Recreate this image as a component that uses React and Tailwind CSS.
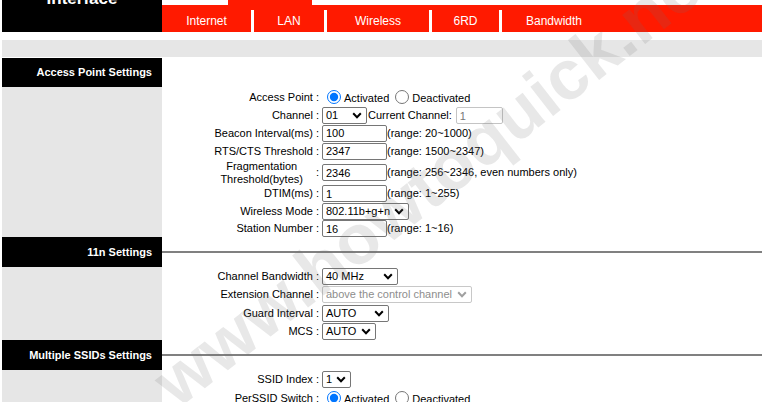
const Chevron = ({ grey }) => (
  <svg width="10" height="7" viewBox="0 0 10 7" className={grey ? "text-[#a0a0a0]" : "text-black"}>
    <path d="M1.2 1.3 L5 5.2 L8.8 1.3" stroke="currentColor" strokeWidth="2" fill="none" />
  </svg>
);

const Select = ({ value, w, disabled }) => (
  <div
    className={`${w} h-[17px] rounded-[2px] border flex items-center justify-between pl-[3px] pr-[4px] ${
      disabled ? "border-[#c8c8c8] text-[#8d8d8d]" : "border-[#767676] text-black"
    }`}
  >
    <span>{value}</span>
    <Chevron grey={disabled} />
  </div>
);

const TextBox = ({ value }) => (
  <input
    readOnly
    value={value}
    className="w-[65px] h-[17px] border border-[#767676] rounded-[2px] px-[3px] text-[11px] outline-none"
  />
);

const Radios = () => (
  <>
    <input type="radio" checked readOnly className="w-[14px] h-[14px] ml-[5px] mr-[3px]" />
    <span className="pt-[2px]">Activated</span>
    <input type="radio" checked={false} readOnly className="w-[14px] h-[14px] ml-[6px] mr-[3px]" />
    <span className="pt-[2px]">Deactivated</span>
  </>
);

const Row = ({ label, h = "h-[18px]", children }) => (
  <div className={`flex items-center ${h}`}>
    <div className="w-[160px] shrink-0 text-right pr-[3px] whitespace-nowrap">{label} :</div>
    <div className="flex items-center whitespace-nowrap">{children}</div>
  </div>
);

const Section = ({ title, line, head = "h-[30px]", children }) => (
  <div className="flex">
    <div className="w-[160px] shrink-0 bg-[#e6e6e6] flex flex-col">
      <div className={`${head} bg-black text-white font-bold flex items-center justify-end pr-[10px]`}>
        {title}
      </div>
    </div>
    <div className="flex-1 flex flex-col">
      <div className={`${head} flex items-center`}>
        {line && <div className="h-[2px] w-full bg-[#808080]" />}
      </div>
      {children}
    </div>
  </div>
);

const tabs = [
  { name: "Internet", w: "w-[89px]" },
  { name: "LAN", w: "w-[70px]" },
  { name: "Wireless", w: "w-[102px]" },
  { name: "6RD", w: "w-[67px]" },
  { name: "Bandwidth", w: "w-[104px]" },
];

export default function App() {
  return (
    <div className="relative w-[765px] h-[402px] overflow-hidden bg-white font-['Liberation_Sans',Arial,sans-serif] text-[11px] text-black">
      <div className="ml-[2px] w-[760px]">
        {/* top menu */}
        <div className="flex h-[32px]">
          <div className="w-[160px] bg-black overflow-hidden">
            <div className="-mt-[10px] text-center text-white font-bold text-[17px] leading-[17px]">Interface</div>
          </div>
          <div className="flex-1 flex flex-col">
            <div className="h-[5px] flex">
              <div className="ml-[66px] w-[84px] bg-[#ff1a00]" />
            </div>
            <div className="flex-1 bg-[#ff1a00] flex items-end">
              {tabs.map((t, i) => (
                <div key={t.name} className="flex h-[22px]">
                  {i > 0 && <div className="w-[3px] bg-white" />}
                  <div className={`${t.w} flex items-center justify-center text-white text-[12px]`}>{t.name}</div>
                </div>
              ))}
            </div>
          </div>
        </div>

        <div className="mt-[8px] mb-[1px] h-[17px] bg-[#e6e6e6]" />

        <Section title="Access Point Settings" head="h-[29px]">
          <Row label="Access Point" h="h-[20px]">
            <Radios />
          </Row>
          <Row label="Channel" h="h-[17px]">
            <Select value="01" w="w-[45px]" />
            <span className="ml-[1px]">Current Channel:</span>
            <input
              readOnly
              value="1"
              className="ml-[4px] w-[47px] h-[17px] border border-[#c4c4c4] rounded-[2px] px-[3px] text-[11px] text-[#777] outline-none"
            />
          </Row>
          <Row label="Beacon Interval(ms)">
            <TextBox value="100" />
            <span>(range: 20~1000)</span>
          </Row>
          <Row label="RTS/CTS Threshold">
            <TextBox value="2347" />
            <span>(range: 1500~2347)</span>
          </Row>
          <div className="flex items-center h-[25px]">
            <div className="w-[160px] shrink-0 flex items-center justify-end pr-[3px]">
              <div className="text-center leading-[13px]">
                Fragmentation
                <br />
                Threshold(bytes)
              </div>
              <span className="ml-[13px]">:</span>
            </div>
            <div className="flex items-center whitespace-nowrap">
              <TextBox value="2346" />
              <span>(range: 256~2346, even numbers only)</span>
            </div>
          </div>
          <Row label="DTIM(ms)" h="h-[17px]">
            <TextBox value="1" />
            <span>(range: 1~255)</span>
          </Row>
          <Row label="Wireless Mode">
            <Select value="802.11b+g+n" w="w-[87px]" />
          </Row>
          <Row label="Station Number" h="h-[17px]">
            <TextBox value="16" />
            <span>(range: 1~16)</span>
          </Row>
        </Section>

        <Section title="11n Settings" line>
          <Row label="Channel Bandwidth">
            <Select value="40 MHz" w="w-[76px]" />
          </Row>
          <Row label="Extension Channel" h="h-[19px]">
            <Select value="above the control channel" w="w-[150px]" disabled />
          </Row>
          <Row label="Guard Interval">
            <Select value="AUTO" w="w-[67px]" />
          </Row>
          <Row label="MCS">
            <Select value="AUTO" w="w-[54px]" />
          </Row>
        </Section>

        <Section title="Multiple SSIDs Settings" line>
          <Row label="SSID Index">
            <Select value="1" w="w-[29px]" />
          </Row>
          <Row label="PerSSID Switch" h="h-[20px]">
            <Radios />
          </Row>
          <Row label="Broadcast SSID" h="h-[20px]">
            <Radios />
          </Row>
        </Section>
      </div>

      {/* watermark */}
      <div className="pointer-events-none absolute left-[436px] top-[177px] -translate-x-1/2 -translate-y-1/2 -rotate-[38deg] whitespace-nowrap font-bold text-[70px] leading-none text-[#6e6e6e29]">
        www.howtoquick.net
      </div>
    </div>
  );
}
